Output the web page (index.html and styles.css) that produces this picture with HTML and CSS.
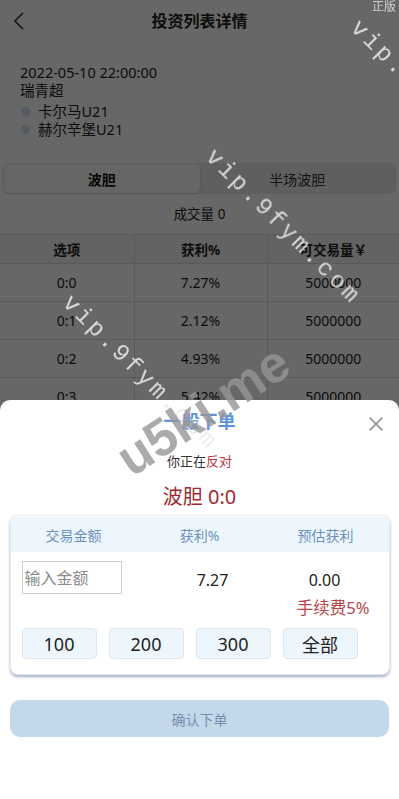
FILE: index.html
```html
<!DOCTYPE html>
<html lang="zh-CN">
<head>
<meta charset="utf-8">
<title>投资列表详情</title>
<link rel="stylesheet" href="styles.css">
</head>
<body>
<div class="page">
  <header class="topbar">
    <svg class="back" width="12" height="20" viewBox="0 0 12 20"><path d="M10 2 L2 10 L10 18" fill="none" stroke="#333" stroke-width="1.6"/></svg>
    <h1 class="title">投资列表详情</h1>
  </header>
  <section class="info">
    <div class="date">2022-05-10 22:00:00</div>
    <div class="league">瑞青超</div>
    <ul class="teams">
      <li><span class="dot"></span>卡尔马U21</li>
      <li><span class="dot"></span>赫尔辛堡U21</li>
    </ul>
  </section>
  <div class="tabs">
    <div class="tab active">波胆</div>
    <div class="tab">半场波胆</div>
  </div>
  <div class="volume">成交量 0</div>
  <table class="odds">
    <thead>
      <tr><th>选项</th><th>获利%</th><th>可交易量￥</th></tr>
    </thead>
    <tbody>
      <tr><td>0:0</td><td>7.27%</td><td>5000000</td></tr>
      <tr><td>0:1</td><td>2.12%</td><td>5000000</td></tr>
      <tr><td>0:2</td><td>4.93%</td><td>5000000</td></tr>
      <tr><td>0:3</td><td>5.42%</td><td>5000000</td></tr>
      <tr><td>1:0</td><td>3.10%</td><td>5000000</td></tr>
    </tbody>
  </table>
</div>

<div class="mask"></div>

<div class="sheet">
  <div class="sheet-title">一般下单</div>
  <svg class="close" width="16" height="16" viewBox="0 0 16 16"><path d="M1.5 1.5 L14.5 14.5 M14.5 1.5 L1.5 14.5" stroke="#8a8a8a" stroke-width="1.6" fill="none"/></svg>
  <div class="side">你正在<span class="red">反对</span></div>
  <div class="pick">波胆 0:0</div>
  <div class="card">
    <div class="card-head">
      <span>交易金额</span><span>获利%</span><span>预估获利</span>
    </div>
    <div class="card-row">
      <div class="cell-input"><input class="amount" type="text" placeholder="输入金额"></div>
      <div class="cell-rate">7.27</div>
      <div class="cell-est">0.00</div>
    </div>
    <div class="fee">手续费5%</div>
    <div class="quick">
      <button class="qbtn">100</button>
      <button class="qbtn">200</button>
      <button class="qbtn">300</button>
      <button class="qbtn">全部</button>
    </div>
  </div>
  <button class="confirm">确认下单</button>
</div>

<div class="wm">
  <div class="wm-anchor wm-a"><span class="wm-vip">vip.9fym.com</span></div>
  <div class="wm-anchor wm-b"><span class="wm-vip">vip.9fym.com</span></div>
  <div class="wm-anchor wm-c"><span class="wm-vip">vip.9fym.com</span></div>
  <div class="wm-anchor wm-d"><span class="wm-big">u5ki.me</span></div>
  <div class="wm-zb">正版</div>
</div>
</body>
</html>
```
FILE: styles.css
```css
* { box-sizing: border-box; }
html, body { margin: 0; padding: 0; }
body {
  width: 399px;
  height: 799px;
  overflow: hidden;
  background: #fff;
  font-family: "Noto Sans", "Noto Sans CJK SC", sans-serif;
  color: #333;
  position: relative;
}

.page { width: 399px; }

.topbar {
  height: 42px;
  display: flex;
  align-items: center;
  justify-content: center;
  position: relative;
}
.back { position: absolute; left: 13px; top: 11px; }
.title {
  margin: 0;
  font-size: 16px;
  font-weight: 700;
  color: #222;
  line-height: 24px;
}

.info {
  padding: 21px 20px 0;
  font-size: 14.5px;
  line-height: 18px;
  color: #222;
}
.teams { list-style: none; margin: 3px 0 0; padding: 0; }
.teams li { display: flex; align-items: center; height: 18px; }
.dot {
  width: 9px; height: 9px; border-radius: 50%;
  background: #cfe0f6;
  margin: 0 8px 0 1px;
}

.tabs {
  margin: 25px 3px 0;
  height: 31px;
  background: #ebebeb;
  border-radius: 6px;
  display: flex;
  padding: 1px;
}
.tab {
  flex: 1;
  display: flex;
  align-items: center;
  justify-content: center;
  font-size: 14px;
  color: #333;
}
.tab.active {
  background: #fcfcfc;
  border-radius: 5px;
  font-weight: 700;
  color: #111;
  box-shadow: 0 1px 2px rgba(0,0,0,0.15);
}

.volume {
  margin-top: 11px;
  text-align: center;
  font-size: 13.5px;
  line-height: 18px;
  color: #222;
}

.odds {
  margin-top: 11px;
  width: 399px;
  border-collapse: collapse;
  table-layout: fixed;
  font-size: 14px;
  color: #222;
}
.odds th, .odds td {
  border: 1px solid #dcdcdc;
  text-align: center;
  padding: 0;
}
.odds th:first-child, .odds td:first-child { border-left: none; }
.odds th:last-child, .odds td:last-child { border-right: none; }
.odds th {
  height: 29px;
  background: #f4f4f4;
  font-weight: 700;
  font-size: 13.5px;
}
.odds td { height: 38px; }
.odds th:nth-child(1) { width: 134px; }
.odds th:nth-child(2) { width: 133px; }

.mask {
  position: fixed;
  inset: 0;
  background: rgba(0,0,0,0.595);
}

.sheet {
  position: fixed;
  left: 0;
  right: 0;
  top: 400px;
  bottom: 0;
  background: #fff;
  border-radius: 10px 10px 0 0;
  padding-top: 9px;
  display: flex;
  flex-direction: column;
  align-items: center;
}
.sheet-title {
  font-size: 18px;
  font-weight: 700;
  color: #5f92db;
  line-height: 24px;
}
.close { position: absolute; right: 15px; top: 16px; }
.side {
  margin-top: 19px;
  font-size: 13px;
  line-height: 18px;
  color: #333;
}
.red { color: #b4373c; }
.pick {
  margin-top: 14px;
  font-size: 20px;
  line-height: 26px;
  color: #9f2b30;
}

.card {
  margin-top: 5px;
  width: 380px;
  border: 1px solid #e5ecf3;
  border-radius: 8px;
  box-shadow: 0 2px 3px rgba(110,120,160,0.6);
  padding: 1px 0 15px;
  background: #fff;
}
.card-head {
  height: 35px;
  background: #eef6fd;
  display: grid;
  grid-template-columns: 126px 126px 126px;
  align-items: center;
  text-align: center;
  font-size: 14px;
  color: #6b92bf;
  border-radius: 7px 7px 0 0;
}
.card-row {
  margin-top: 9px;
  display: grid;
  grid-template-columns: 126px 126px 126px;
  align-items: center;
  height: 33px;
  font-size: 16px;
  color: #222;
}
.cell-input { padding-left: 11px; }
.amount {
  width: 100px;
  height: 33px;
  border: 1px solid #cfcfcf;
  border-radius: 0;
  padding: 0 0 0 2px;
  font-family: inherit;
  font-size: 16px;
  color: #333;
  outline: none;
}
.amount::placeholder { color: #8a8a8a; }
.cell-rate { text-align: center; padding-left: 26px; padding-top: 4px; }
.cell-est { text-align: center; padding-right: 2px; padding-top: 4px; }

.fee {
  margin-top: 4px;
  text-align: right;
  padding-right: 19px;
  font-size: 16.5px;
  line-height: 20px;
  color: #b6474a;
}
.quick {
  margin-top: 10px;
  padding-left: 11px;
  display: flex;
  gap: 12px;
}
.qbtn {
  width: 75px;
  height: 31px;
  background: #eef6fd;
  border: 1px solid #dfe6ee;
  border-radius: 4px;
  font-family: inherit;
  font-size: 18px;
  color: #222;
  padding: 0;
}

.confirm {
  margin-top: 25px;
  width: 379px;
  height: 37px;
  background: #c3d9ea;
  border: none;
  border-radius: 10px;
  font-family: inherit;
  font-size: 14px;
  color: #7b8db1;
}

/* watermarks laid over the screenshot */
.wm { position: fixed; inset: 0; pointer-events: none; overflow: hidden; }
.wm-anchor { position: absolute; width: 0; height: 0; }
.wm-vip, .wm-big {
  position: absolute;
  left: 0; top: 0;
  white-space: nowrap;
}
.wm-vip {
  font-family: "Liberation Mono", monospace;
  font-size: 24px;
  letter-spacing: 3px;
  color: rgba(235,235,235,0.85);
  transform: translate(-50%, -50%) rotate(45deg);
}
.wm-a { left: 428px; top: 98px; }
.wm-b { left: 283px; top: 227px; }
.wm-c { left: 140px; top: 373px; }
.wm-d { left: 203px; top: 410px; }
.wm-big {
  font-family: "Liberation Sans", sans-serif;
  font-weight: 700;
  font-size: 52px;
  color: rgba(150,150,150,0.8);
  transform: translate(-50%, -50%) rotate(-33deg);
}
.wm-zb {
  position: absolute;
  right: 3px;
  top: -3px;
  font-size: 12px;
  color: #cfcfcf;
}
```
